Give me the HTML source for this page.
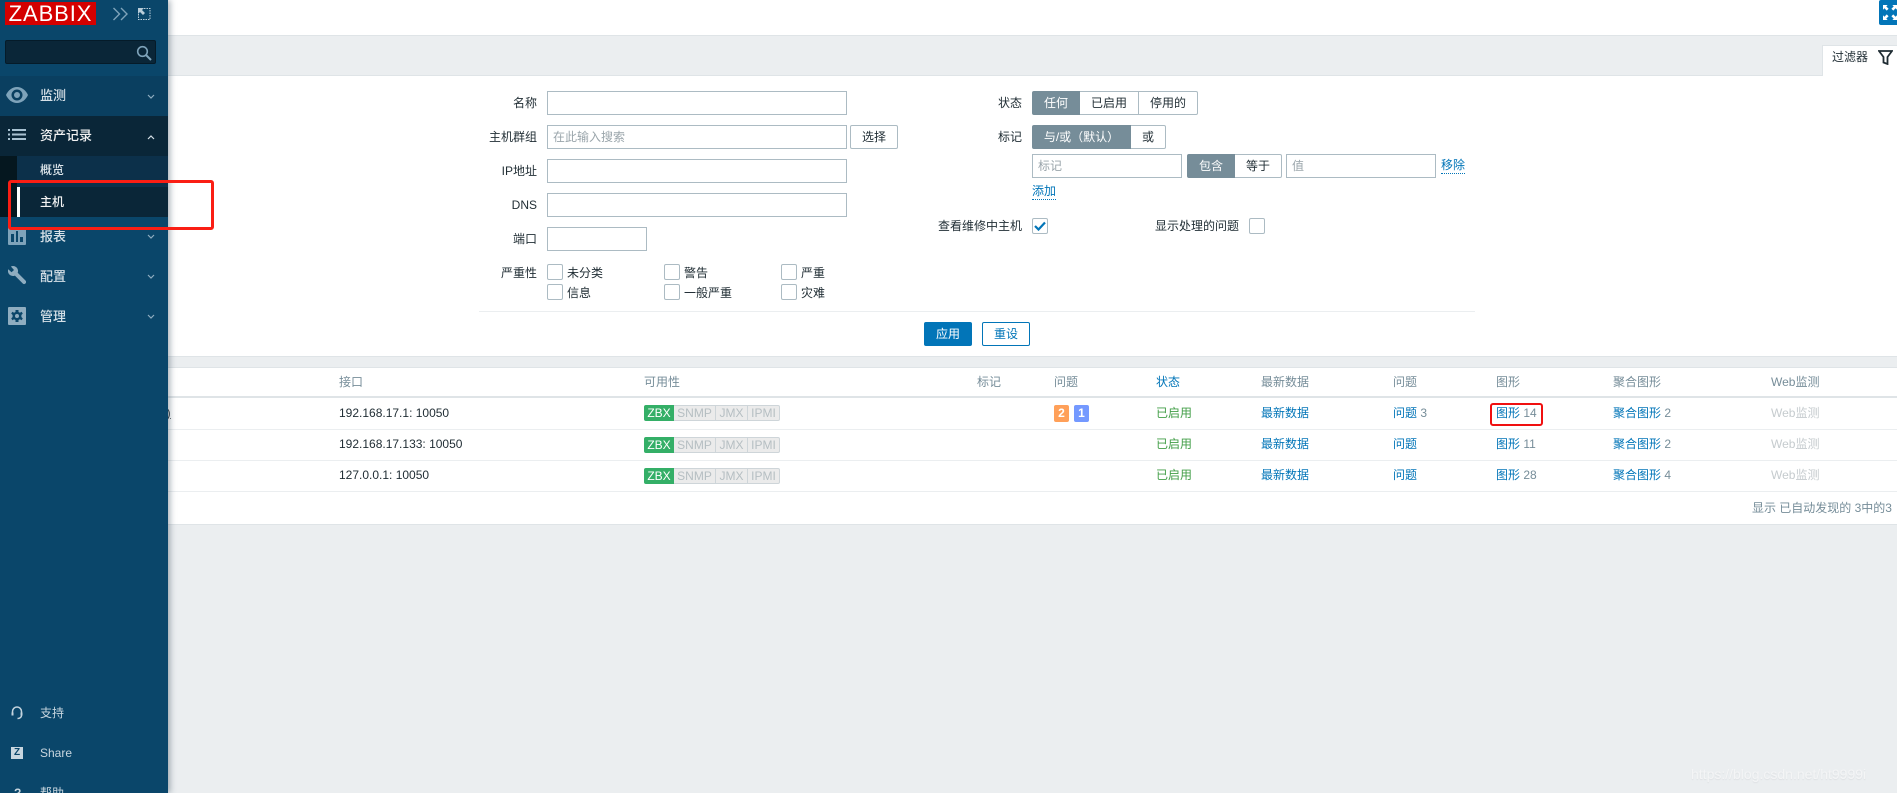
<!DOCTYPE html>
<html lang="zh"><head><meta charset="utf-8"><title>Zabbix</title>
<style>
html,body{margin:0;padding:0;width:1897px;height:793px;overflow:hidden;background:#ebeef0}
body{position:relative;font-family:"Liberation Sans","Noto Sans CJK SC",sans-serif;font-size:12px;color:#1f2c33}
div,a,span.t{position:absolute;box-sizing:border-box}
.t{position:absolute;line-height:16px;white-space:nowrap}
.r{text-align:right}
.l{color:#0275b8}
.g{color:#768d99}
.h{color:#768d99}
.ip{border:1px solid #acbbc3;background:#fff}
.ck{width:16px;height:16px;border:1px solid #acbbc3;border-radius:2px;background:#fff}
.ph{color:#9aa5ab}
.seg{background:#fff;border:1px solid #acbbc3;text-align:center;line-height:22px;color:#1f2c33}
.on{background:#768d99;border-color:#768d99;color:#fff}
.line{height:1px;background:#ebeef0;left:168px;width:1729px}
.zb{height:16px;background:#ebebeb;border:1px solid #ced5d9;border-left:0;color:#b5bec2;font-size:12px;line-height:14px;text-align:center;}
.zg{height:16px;background:#34af67;color:#fff;line-height:16px;text-align:center;border-radius:2px 0 0 2px}
.nav{color:#f2f2f2;line-height:16px;white-space:nowrap;font-weight:500}
svg{position:absolute;display:block}
</style></head><body>
<!-- main areas -->
<div style="left:168px;top:0;width:1729px;height:35px;background:#fff"></div>
<div style="left:168px;top:35px;width:1729px;height:1px;background:#dfe4e7"></div>
<div style="left:168px;top:75px;width:1729px;height:1px;background:#dfe4e7"></div>
<div style="left:168px;top:76px;width:1729px;height:280px;background:#fff"></div>
<div style="left:168px;top:356px;width:1729px;height:1px;background:#dfe4e7"></div>
<div style="left:168px;top:367px;width:1729px;height:157px;background:#fff;border-top:1px solid #dfe4e7"></div>
<div style="left:168px;top:524px;width:1729px;height:1px;background:#dfe4e7"></div>
<!-- top right -->
<div style="left:1879px;top:0;width:18px;height:25px;background:#0275b8;border-radius:2px 0 0 2px"></div>
<svg style="left:1883px;top:5px" width="14" height="15" viewBox="0 0 15 16" fill="#fff"><path d="M0 0h5L3.500 1.500 6 4 4 6 1.500 3.500 0 5zM15 0v5l-1.500-1.500L11 6 9 4l2.500-2.500L10 0zM0 16v-5l1.500 1.500L4 10l2 2-2.500 2.500L5 16zM15 16h-5l1.500-1.500L9 12l2-2 2.500 2.500L15 11z"/></svg>
<div style="left:1822px;top:45px;width:75px;height:31px;background:#fff;border:1px solid #dfe4e7;border-width:1px 0 0 1px"></div>
<span class="t" style="left:1832px;top:49px">过滤器</span>
<svg style="left:1878px;top:50px" width="15" height="15" viewBox="0 0 15 15" fill="none" stroke="#1f2c33" stroke-width="1.800"><path d="M1 1h13L9.500 7v7L5.500 12.500V7z"/></svg>
<!-- form left -->
<span class="t r" style="right:1360px;top:95px">名称</span>
<div class="ip" style="left:547px;top:91px;width:300px;height:24px"></div>
<span class="t r" style="right:1360px;top:129px">主机群组</span>
<div class="ip" style="left:547px;top:125px;width:300px;height:24px"></div>
<span class="t ph" style="left:553px;top:129px">在此输入搜索</span>
<div class="seg" style="left:850px;top:125px;width:48px;height:24px;border-radius:2px">选择</div>
<span class="t r" style="right:1360px;top:163px">IP地址</span>
<div class="ip" style="left:547px;top:159px;width:300px;height:24px"></div>
<span class="t r" style="right:1360px;top:197px">DNS</span>
<div class="ip" style="left:547px;top:193px;width:300px;height:24px"></div>
<span class="t r" style="right:1360px;top:231px">端口</span>
<div class="ip" style="left:547px;top:227px;width:100px;height:24px"></div>
<span class="t r" style="right:1360px;top:265px">严重性</span>
<div class="ck" style="left:547px;top:264px"></div><span class="t" style="left:567px;top:265px">未分类</span>
<div class="ck" style="left:664px;top:264px"></div><span class="t" style="left:684px;top:265px">警告</span>
<div class="ck" style="left:781px;top:264px"></div><span class="t" style="left:801px;top:265px">严重</span>
<div class="ck" style="left:547px;top:284px"></div><span class="t" style="left:567px;top:285px">信息</span>
<div class="ck" style="left:664px;top:284px"></div><span class="t" style="left:684px;top:285px">一般严重</span>
<div class="ck" style="left:781px;top:284px"></div><span class="t" style="left:801px;top:285px">灾难</span>
<!-- form right -->
<span class="t r" style="right:875px;top:95px">状态</span>
<div class="seg on" style="left:1032px;top:91px;width:48px;height:24px;border-radius:2px 0 0 2px">任何</div>
<div class="seg" style="left:1080px;top:91px;width:59px;height:24px;border-left:0">已启用</div>
<div class="seg" style="left:1139px;top:91px;width:59px;height:24px;border-left:0;border-radius:0 2px 2px 0">停用的</div>
<span class="t r" style="right:875px;top:129px">标记</span>
<div class="seg on" style="left:1032px;top:125px;width:99px;height:24px;border-radius:2px 0 0 2px">与/或（默认）</div>
<div class="seg" style="left:1131px;top:125px;width:35px;height:24px;border-left:0;border-radius:0 2px 2px 0">或</div>
<div class="ip" style="left:1032px;top:154px;width:150px;height:24px"></div>
<span class="t ph" style="left:1038px;top:158px">标记</span>
<div class="seg on" style="left:1187px;top:154px;width:48px;height:24px;border-radius:2px 0 0 2px">包含</div>
<div class="seg" style="left:1235px;top:154px;width:47px;height:24px;border-left:0;border-radius:0 2px 2px 0">等于</div>
<div class="ip" style="left:1286px;top:154px;width:150px;height:24px"></div>
<span class="t ph" style="left:1292px;top:158px">值</span>
<span class="t l" style="left:1441px;top:158px;line-height:15px;border-bottom:1px dotted #0275b8">移除</span>
<span class="t l" style="left:1032px;top:184px;line-height:15px;border-bottom:1px dotted #0275b8">添加</span>
<span class="t r" style="right:875px;top:218px">查看维修中主机</span>
<div class="ck" style="left:1032px;top:218px"></div>
<svg style="left:1034px;top:221px" width="12" height="10" viewBox="0 0 12 10" fill="none" stroke="#0275b8" stroke-width="2.200"><path d="M1 5l3.500 3.500L11 1.500"/></svg>
<span class="t" style="left:1155px;top:218px">显示处理的问题</span>
<div class="ck" style="left:1249px;top:218px"></div>
<div style="left:479px;top:311px;width:996px;height:1px;background:#ebeef0"></div>
<div style="left:924px;top:322px;width:48px;height:24px;background:#0275b8;border-radius:2px;color:#fff;text-align:center;line-height:24px">应用</div>
<div style="left:982px;top:322px;width:48px;height:24px;background:#fff;border:1px solid #0275b8;border-radius:2px;color:#0275b8;text-align:center;line-height:22px">重设</div>
<!-- table -->
<span class="t h" style="left:339px;top:374px">接口</span>
<span class="t h" style="left:644px;top:374px">可用性</span>
<span class="t h" style="left:977px;top:374px">标记</span>
<span class="t h" style="left:1054px;top:374px">问题</span>
<span class="t l" style="left:1156px;top:374px">状态</span>
<span class="t h" style="left:1261px;top:374px">最新数据</span>
<span class="t h" style="left:1393px;top:374px">问题</span>
<span class="t h" style="left:1496px;top:374px">图形</span>
<span class="t h" style="left:1613px;top:374px">聚合图形</span>
<span class="t h" style="left:1771px;top:374px">Web监测</span>
<div class="line" style="top:396px;height:2px;background:#dfe4e7"></div>
<div class="line" style="top:429px"></div>
<div class="line" style="top:460px"></div>
<div class="line" style="top:491px"></div>
<span class="t" style="left:160px;top:405px;text-decoration:underline">2)</span>

<span class="t" style="left:339px;top:405px">192.168.17.1: 10050</span>
<span class="t" style="left:339px;top:436px">192.168.17.133: 10050</span>
<span class="t" style="left:339px;top:467px">127.0.0.1: 10050</span>

<div class="zg" style="left:644px;top:405px;width:30px">ZBX</div><div class="zb" style="left:674px;top:405px;width:42px">SNMP</div><div class="zb" style="left:716px;top:405px;width:32px">JMX</div><div class="zb" style="left:748px;top:405px;width:32px;border-radius:0 2px 2px 0">IPMI</div>
<div class="zg" style="left:644px;top:437px;width:30px">ZBX</div><div class="zb" style="left:674px;top:437px;width:42px">SNMP</div><div class="zb" style="left:716px;top:437px;width:32px">JMX</div><div class="zb" style="left:748px;top:437px;width:32px;border-radius:0 2px 2px 0">IPMI</div>
<div class="zg" style="left:644px;top:468px;width:30px">ZBX</div><div class="zb" style="left:674px;top:468px;width:42px">SNMP</div><div class="zb" style="left:716px;top:468px;width:32px">JMX</div><div class="zb" style="left:748px;top:468px;width:32px;border-radius:0 2px 2px 0">IPMI</div>

<div style="left:1054px;top:405px;width:15px;height:17px;background:#ffa059;border-radius:2px;color:#fff;text-align:center;line-height:17px;font-weight:bold">2</div>
<div style="left:1074px;top:405px;width:15px;height:17px;background:#7499ff;border-radius:2px;color:#fff;text-align:center;line-height:17px;font-weight:bold">1</div>

<span class="t" style="left:1156px;top:405px;color:#429e47">已启用</span>
<span class="t" style="left:1156px;top:436px;color:#429e47">已启用</span>
<span class="t" style="left:1156px;top:467px;color:#429e47">已启用</span>
<span class="t l" style="left:1261px;top:405px">最新数据</span>
<span class="t l" style="left:1261px;top:436px">最新数据</span>
<span class="t l" style="left:1261px;top:467px">最新数据</span>
<span class="t" style="left:1393px;top:405px"><span class="l">问题</span> <span class="g">3</span></span>
<span class="t l" style="left:1393px;top:436px">问题</span>
<span class="t l" style="left:1393px;top:467px">问题</span>
<span class="t" style="left:1496px;top:405px"><span class="l">图形</span> <span class="g">14</span></span>
<span class="t" style="left:1496px;top:436px"><span class="l">图形</span> <span class="g">11</span></span>
<span class="t" style="left:1496px;top:467px"><span class="l">图形</span> <span class="g">28</span></span>
<span class="t" style="left:1613px;top:405px"><span class="l">聚合图形</span> <span class="g">2</span></span>
<span class="t" style="left:1613px;top:436px"><span class="l">聚合图形</span> <span class="g">2</span></span>
<span class="t" style="left:1613px;top:467px"><span class="l">聚合图形</span> <span class="g">4</span></span>
<span class="t" style="left:1771px;top:405px;color:#c5cbce">Web监测</span>
<span class="t" style="left:1771px;top:436px;color:#c5cbce">Web监测</span>
<span class="t" style="left:1771px;top:467px;color:#c5cbce">Web监测</span>
<span class="t r g" style="right:5px;top:500px">显示 已自动发现的 3中的3</span>
<div style="left:1490px;top:403px;width:53px;height:23px;border:2px solid #f01010;border-radius:3px"></div>
<span class="t" style="left:1691px;top:766px;color:#f4f5f6;font-size:14px;text-shadow:0 1px 1px #dcdfe2">https://blog.csdn.net/ht9999i</span>

<!-- sidebar -->
<div style="left:0;top:0;width:168px;height:793px;background:#0a466a;box-shadow:2px 0 6px rgba(60,80,95,.45)"></div>
<div style="left:5px;top:2px;width:91px;height:23px;background:#d40000;color:#fff;font-size:22px;line-height:24px;text-align:center;letter-spacing:.9px">ZABBIX</div>
<svg style="left:112px;top:7px" width="17" height="14" viewBox="0 0 17 14" fill="none" stroke="#7ea3ba" stroke-width="1.400"><path d="M1.500 1l6 6-6 6M9 1l6 6-6 6"/></svg>
<svg style="left:137px;top:7px" width="14" height="14" viewBox="0 0 14 14" fill="none" stroke="#b9cdd9" stroke-width="1"><path d="M7 1.500h6v11H1.500V7" stroke-dasharray="1.500 1"/><path d="M1 1h6L5 3l3 3-2 2-3-3-2 2z" fill="#b9cdd9" stroke="none"/></svg>
<div style="left:5px;top:40px;width:151px;height:24px;background:#0a2638;border:1px solid #051b29;border-radius:2px"></div>
<svg style="left:136px;top:45px" width="16" height="16" viewBox="0 0 16 16" fill="none" stroke="#7ea3ba" stroke-width="1.600"><circle cx="6.500" cy="6.500" r="4.800"/><path d="M10 10l5 5" stroke-width="2"/></svg>

<div style="left:0;top:76px;width:168px;height:40px;background:#0a3f60"></div>
<svg style="left:6px;top:87px" width="22" height="16" viewBox="0 0 22 16"><path fill="#7ea3ba" fill-rule="evenodd" d="M11 0c5 0 9 3.500 11 8-2 4.500-6 8-11 8S2 12.500 0 8c2-4.500 6-8 11-8zm0 2.500A5.500 5.500 0 1 0 11 13.500 5.500 5.500 0 0 0 11 2.500zm0 2.500a3 3 0 1 1 0 6 3 3 0 0 1 0-6z"/></svg>
<span class="t nav" style="left:40px;top:88px;font-size:13px;color:#d6e0e7">监测</span>
<svg style="left:147px;top:94px" width="8" height="6" viewBox="0 0 8 6" fill="none" stroke="#8fadc0" stroke-width="1.200"><path d="M1 1l3 3 3-3"/></svg>

<div style="left:0;top:116px;width:168px;height:40px;background:#0a2638"></div>
<svg style="left:8px;top:129px" width="18" height="11" viewBox="0 0 18 11" fill="#a9c2d2"><path d="M0 0h2v2H0zM4 0h14v2H4zM0 4.500h2v2H0zM4 4.500h14v2H4zM0 9h2v2H0zM4 9h14v2H4z"/></svg>
<span class="t nav" style="left:40px;top:128px;font-size:13px">资产记录</span>
<svg style="left:147px;top:134px" width="8" height="6" viewBox="0 0 8 6" fill="none" stroke="#d6e0e7" stroke-width="1.200"><path d="M1 5l3-3 3 3"/></svg>

<div style="left:0;top:156px;width:17px;height:61px;background:#05171f"></div>
<div style="left:17px;top:156px;width:151px;height:31px;background:#0c304a"></div>
<div style="left:17px;top:187px;width:151px;height:30px;background:#0a2638"></div>
<div style="left:17px;top:187px;width:3px;height:30px;background:#fff"></div>
<span class="t nav" style="left:40px;top:162px;color:#dfe7ec">概览</span>
<span class="t nav" style="left:40px;top:194px">主机</span>

<svg style="left:8px;top:227px" width="18" height="18" viewBox="0 0 18 18"><path fill="#7ea3ba" fill-rule="evenodd" d="M1 0h16a1 1 0 0 1 1 1v16a1 1 0 0 1-1 1H1a1 1 0 0 1-1-1V1a1 1 0 0 1 1-1zm2 7v8h3V7zm5-3v11h2V4zm4 6v5h3v-5z"/></svg>
<span class="t nav" style="left:40px;top:229px;font-size:13px;color:#d6e0e7">报表</span>
<svg style="left:147px;top:234px" width="8" height="6" viewBox="0 0 8 6" fill="none" stroke="#8fadc0" stroke-width="1.200"><path d="M1 1l3 3 3-3"/></svg>

<svg style="left:8px;top:266px" width="18" height="19" viewBox="0 0 18 19"><path fill="#8fadc0" d="M5 0a5 5 0 0 1 4.700 6.800l8 8a2 2 0 0 1-2.800 2.800l-8-8A5 5 0 0 1 .3 3.200L3.500 6.300 6 4 2.900.5A5 5 0 0 1 5 0z"/></svg>
<span class="t nav" style="left:40px;top:269px;font-size:13px;color:#d6e0e7">配置</span>
<svg style="left:147px;top:274px" width="8" height="6" viewBox="0 0 8 6" fill="none" stroke="#8fadc0" stroke-width="1.200"><path d="M1 1l3 3 3-3"/></svg>

<svg style="left:8px;top:307px" width="18" height="18" viewBox="0 0 18 18"><path fill="#8fadc0" fill-rule="evenodd" d="M1 0h16a1 1 0 0 1 1 1v16a1 1 0 0 1-1 1H1a1 1 0 0 1-1-1V1a1 1 0 0 1 1-1zm6.500 3v2L6 5.800 4.500 4.700 3.200 6.500 4.600 8v2L3.200 11.500l1.300 1.800L6 12.200l1.500.8v2h3v-2l1.500-.8 1.500 1.100 1.300-1.800L13.400 10V8l1.400-1.500-1.300-1.800L12 5.800 10.500 5V3zM9 7a2 2 0 1 1 0 4 2 2 0 0 1 0-4z"/></svg>
<span class="t nav" style="left:40px;top:309px;font-size:13px;color:#d6e0e7">管理</span>
<svg style="left:147px;top:314px" width="8" height="6" viewBox="0 0 8 6" fill="none" stroke="#8fadc0" stroke-width="1.200"><path d="M1 1l3 3 3-3"/></svg>

<svg style="left:11px;top:706px" width="12" height="14" viewBox="0 0 12 14" fill="none" stroke="#c3d3dd" stroke-width="1.500"><path d="M1.500 7V5.500a4.500 4.500 0 0 1 9 0V7"/><path d="M6.500 12.500c2.500 0 4-1.500 4-3"/><path d="M.5 6.500h2v3h-2zM9.500 6.500h2v3h-2z" fill="#c3d3dd" stroke="none"/></svg>
<span class="t" style="left:40px;top:705px;color:#c8d6df">支持</span>
<div style="left:11px;top:747px;width:12px;height:12px;background:#c8d6df;color:#0a466a;font-size:10px;font-weight:bold;line-height:12px;text-align:center">Z</div>
<span class="t" style="left:40px;top:745px;color:#c8d6df">Share</span>
<span class="t" style="left:14px;top:785px;color:#c8d6df;font-weight:bold">?</span>
<span class="t" style="left:40px;top:785px;color:#c8d6df">帮助</span>

<div style="left:8px;top:180px;width:206px;height:50px;border:3px solid #fa1e14;border-radius:3px"></div>
</body></html>
